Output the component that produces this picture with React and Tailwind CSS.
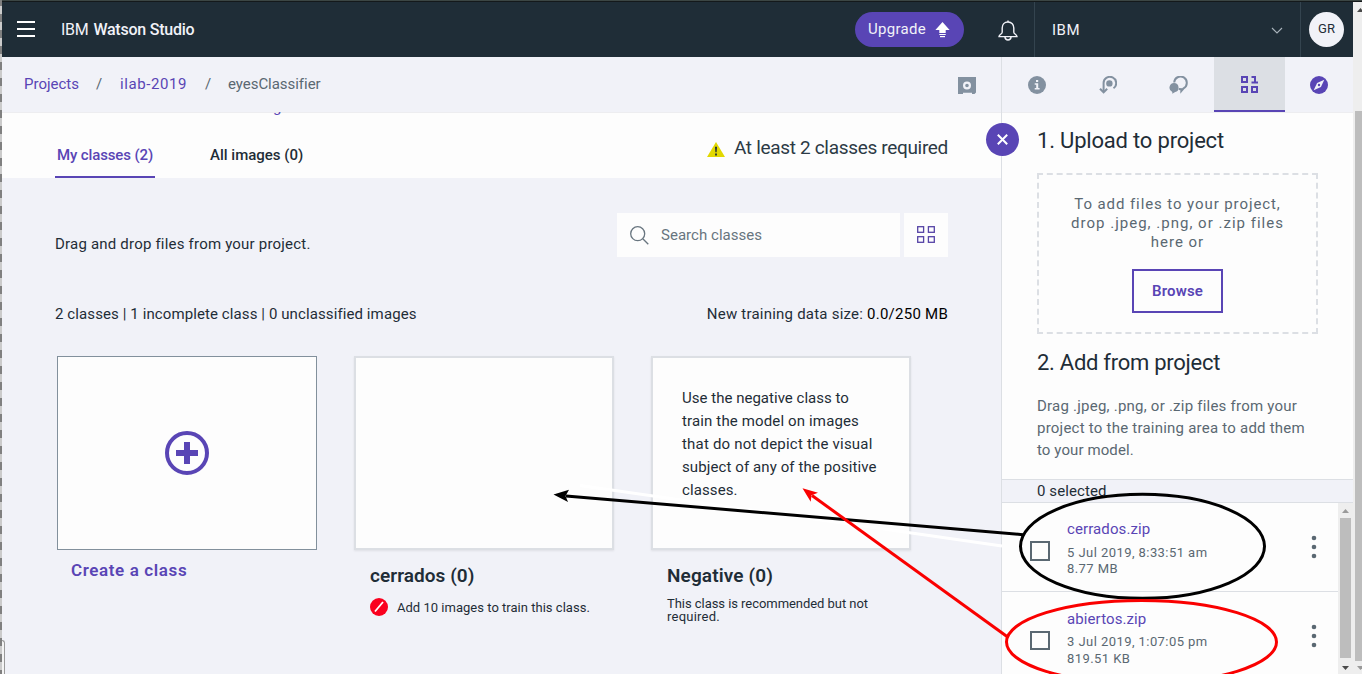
const HEADER_TEXT = "text-[#f1f2f8]";

function Header() {
  return (
    <header className={`flex h-[55px] shrink-0 items-stretch bg-[#1f2d37] ${HEADER_TEXT}`}>
      <div className="flex flex-1 items-center pl-[15px]">
        <div className="mb-px flex w-[18px] flex-col gap-[5px]">
          <span className="h-[2px] bg-white" />
          <span className="h-[2px] bg-white" />
          <span className="h-[2px] bg-white" />
        </div>
        <div className="ml-[26px] flex text-[16px] leading-[20px]">
          <span className="tracking-[-0.3px]">IBM</span>
          <span className="ml-[5px] font-medium tracking-[-0.24px]">Watson Studio</span>
        </div>
      </div>
      <button className="mr-[34px] mt-[10px] flex h-[35px] w-[109px] items-center rounded-full bg-[#5945b5] pl-[13px] text-[15px] leading-[20px]">
        <span className="pb-px tracking-[0.29px]">Upgrade</span>
        <svg className="ml-[9px]" width="15" height="16" viewBox="0 0 15 16" fill="#fff">
          <path d="M7.500 0 14.600 8H10.700V11H4.300V8H.4Z" />
          <rect x="4.300" y="12" width="6.400" height="1" />
          <rect x="5" y="14" width="5" height="1.200" />
        </svg>
      </button>
      <div className="flex w-[36px] shrink-0 items-center">
        <svg width="20" height="22" viewBox="0 0 20 22" fill="none" stroke="#f1f2f8" strokeWidth="1.400" className="mt-[2px]">
          <path d="M10 2C6.300 2 4.200 4.700 4.200 8v4.200C4.200 14 1 14.600 1 16.600h18c0-2-3.200-2.600-3.200-4.400V8C15.800 4.700 13.700 2 10 2Z" />
          <path d="M10 2V.4M6.900 16.900c.2 1.700 1.500 3.100 3.100 3.100s2.900-1.400 3.100-3.100" />
        </svg>
      </div>
      <div className="flex w-[267px] shrink-0 items-center justify-between border-x border-[#34444f] pl-[17px] pr-[17px]">
        <span className="pt-px text-[15px] leading-[20px] tracking-[0.49px]">IBM</span>
        <svg width="12" height="8" viewBox="0 0 12 8" fill="none" stroke="#a9b3bb" strokeWidth="1.100" className="mt-[3px]">
          <path d="m1 1 5 5 5-5" />
        </svg>
      </div>
      <div className="flex w-[52px] shrink-0 items-center pl-[8px]">
        <div className="flex h-[35px] w-[35px] items-center justify-center rounded-full bg-[#f1f2f8] pb-[1px] text-[13px] text-[#1f2d37]">
          GR
        </div>
      </div>
    </header>
  );
}

function Breadcrumb() {
  return (
    <div className="flex h-[56px] shrink-0 items-center border-b border-[#ededf0] pb-[2px] pl-[22px] pr-[25px] text-[15px] leading-[20px] text-[#5945b5]">
      <span className="w-[72px]">Projects</span>
      <span className="w-[24px] text-[#5a6872]">/</span>
      <span className="w-[85px] tracking-[0.58px]">ilab-2019</span>
      <span className="w-[23px] text-[#5a6872]">/</span>
      <span className="flex-1 tracking-[-0.04px] text-[#5a6872]">eyesClassifier</span>
      <svg width="18" height="17" viewBox="0 0 18 17" className="mt-[3px]">
        <path d="M0 0H18V15.500L16.500 17H14V15.800H5V17H0Z" fill="#8391a0" />
        <circle cx="9" cy="8.500" r="2.900" fill="none" stroke="#f1f2f8" strokeWidth="2.200" />
      </svg>
    </div>
  );
}

function Tabs() {
  return (
    <div className="relative flex h-[65px] shrink-0 items-end bg-[#fdfdfd] pl-[53px] pr-[53px] text-[15px] leading-[20px]">
      <div className="absolute -top-px left-[271px] h-[3px] w-[12px] overflow-hidden">
        <div className="-mt-[15px] text-[#5945b5]">g</div>
      </div>
      <div className="h-[33px] w-[100px] border-b-2 border-[#5945b5] pl-[2px] font-medium tracking-[-0.13px] text-[#5945b5]">
        My classes (2)
      </div>
      <div className="ml-[55px] h-[33px] flex-1 font-medium text-[#1f2d37]">All images (0)</div>
      <div className="flex h-[43px] items-start">
        <svg width="18" height="15" viewBox="0 0 18 15" className="mr-[9px] mt-[7px]">
          <path d="M9 0 18 15H0Z" fill="#e2d800" />
          <path d="M8 4.700h2l-.4 5.600H8.400ZM8.100 11.600h1.800v1.900H8.100Z" fill="#1f2d37" />
        </svg>
        <span className="text-[19px] leading-[26px] tracking-[-0.32px] text-[#2c3a45]">At least 2 classes required</span>
      </div>
    </div>
  );
}

function Toolbar() {
  return (
    <div className="flex h-[44px] items-start">
      <p className="flex-1 pt-[21px] leading-[20px] tracking-[0.2px]">Drag and drop files from your project.</p>
      <div className="flex h-[44px] w-[283px] items-center bg-[#fdfdfd] pl-[13px] text-[#68757f]">
        <svg width="19" height="19" viewBox="0 0 19 19" fill="none" stroke="#68757f" strokeWidth="1.300">
          <circle cx="7.700" cy="7.700" r="7" />
          <path d="m12.800 12.800 5.500 5.500" />
        </svg>
        <span className="ml-[12px] leading-[20px] tracking-[0.03px]">Search classes</span>
      </div>
      <div className="ml-[4px] flex h-[44px] w-[44px] items-center justify-center bg-[#fdfdfd]">
        <svg width="18" height="17" viewBox="0 0 18 17" fill="none" stroke="#5543a6" strokeWidth="1.300" className="mb-px">
          <rect x=".7" y=".7" width="5.900" height="5.600" />
          <rect x="11.400" y=".7" width="5.900" height="5.600" />
          <rect x=".7" y="10.700" width="5.900" height="5.600" />
          <rect x="11.400" y="10.700" width="5.900" height="5.600" />
        </svg>
      </div>
    </div>
  );
}

const CARD = "h-[194px] w-[260px] bg-[#fdfdfd]";
const CARD_EDGE = "border-2 border-[#dcdfe4] shadow-[0_1px_2px_rgba(0,0,0,0.08)]";

function Classes() {
  return (
    <div className="mt-[32px] flex gap-[37px] pl-[2px]">
      <section>
        <div className={`${CARD} flex items-center justify-center border border-[#82909c]`}>
          <svg width="44" height="44" viewBox="0 0 44 44" fill="none" stroke="#5945b5">
            <circle cx="22" cy="22" r="20" strokeWidth="4" />
            <path d="M22 11V33M11 22H33" strokeWidth="6" />
          </svg>
        </div>
        <h3 className="ml-[14px] mt-[8px] text-[17px] font-semibold leading-[24px] tracking-[0.61px] text-[#5945b5]">Create a class</h3>
      </section>
      <section>
        <div className={`${CARD} ${CARD_EDGE}`} />
        <h3 className="ml-[16px] mt-[14px] text-[19px] font-semibold leading-[24px] tracking-[0.06px]">cerrados (0)</h3>
        <div className="ml-[16px] mt-[10px] flex items-center text-[13px] leading-[18px]">
          <svg width="18" height="18" viewBox="0 0 18 18" className="mb-[2px]">
            <circle cx="9" cy="9" r="9" fill="#fa001e" />
            <path d="m5 13.500 8-9.500" stroke="#fff" strokeWidth="1.800" />
          </svg>
          <span className="ml-[9px] tracking-[0.02px]">Add 10 images to train this class.</span>
        </div>
      </section>
      <section className="w-[260px]">
        <div className={`${CARD} ${CARD_EDGE} px-[29px] pt-[29px] leading-[23px] tracking-[0.1px]`}>
          <span className="tracking-[0.02px]">Use the negative class to</span>
          <br />
          <span className="tracking-[0.14px]">train the model on images</span>
          <br />
          <span className="tracking-[0.2px]">that do not depict the visual</span>
          <br />
          subject of any of the positive
          <br />
          classes.
        </div>
        <h3 className="ml-[16px] mt-[14px] text-[19px] font-semibold leading-[24px] tracking-[0.13px]">Negative (0)</h3>
        <p className="ml-[16px] mt-[9px] text-[13px] leading-[13px] tracking-[-0.05px]">
          This class is recommended but not
          <br />
          <span className="tracking-[0.24px]">required.</span>
        </p>
      </section>
    </div>
  );
}

function PanelTabs() {
  const tab = "flex w-[70.500px] shrink-0 items-center justify-center";
  return (
    <nav className="flex h-[56px] shrink-0 border-b border-[#ededf0]">
      <div className={tab}>
        <svg width="18" height="18" viewBox="0 0 18 18">
          <circle cx="9" cy="9" r="9" fill="#8391a0" />
          <path d="M8 4h2.200v2H8ZM6.700 7.300h3.500v4.700h1.400v1.500H6.700V12h1.500V8.800H6.700Z" fill="#f1f2f8" />
        </svg>
      </div>
      <div className={tab}>
        <svg width="18" height="18" viewBox="0 0 18 18" fill="none" stroke="#8391a0" strokeWidth="2">
          <path d="M4.600 16V7.600A6.300 6.300 0 1 1 14.500 12.300" />
          <path d="M1 12.800 4.600 16.300 8.200 12.800" />
          <circle cx="10.400" cy="7.400" r="3.200" fill="#8391a0" stroke="none" />
        </svg>
      </div>
      <div className={tab}>
        <svg width="19" height="18" viewBox="0 0 19 18">
          <path d="M5.200 6.500A6.300 6.300 0 1 1 14.600 12.300L12.300 15V13.200L9.800 12.900" fill="none" stroke="#8391a0" strokeWidth="2" />
          <path d="M5 6.900a4.700 4.700 0 0 1 1.200 9.200L3.300 17.800V15.900A4.700 4.700 0 0 1 5 6.900Z" fill="#8391a0" />
        </svg>
      </div>
      <div className="flex w-[71px] shrink-0 items-center justify-center border-b-2 border-[#5945b5] bg-[#dcdfe4]">
        <svg width="17" height="17" viewBox="0 0 17 17" fill="none" stroke="#5945b5" strokeWidth="2" className="mt-[2px]">
          <path d="M1 1H6V6H1ZM1 11H6V16H1ZM11 11H16V16H11Z" />
          <path d="M10.500 1H14V6M10.500 6.500H17" />
        </svg>
      </div>
      <div className="flex flex-1 items-center justify-center">
        <svg width="18" height="18" viewBox="0 0 18 18">
          <circle cx="9" cy="9" r="9" fill="#5945b5" />
          <path d="M14.300 3.700 10.900 10.900 3.700 14.300 7.100 7.100Z" fill="#f1f2f8" />
          <circle cx="9" cy="9" r="1.200" fill="#5945b5" />
        </svg>
      </div>
    </nav>
  );
}

function FileRow({ name, date, size, className, boxClass, dateClass, sizeClass, menuClass }) {
  return (
    <div className={`flex border-[#dcdfe4] pl-[28px] ${className}`}>
      <span className={`w-[20px] shrink-0 border-2 border-[#5a6872] ${boxClass}`} />
      <div className="ml-[17px] flex-1 text-[13px] leading-[16px] tracking-[0.44px] text-[#5a6872]">
        <div className="text-[15px] leading-[20px] tracking-[0.1px] text-[#5945b5]">{name}</div>
        <div className={dateClass}>{date}</div>
        <div className={sizeClass}>{size}</div>
      </div>
      <svg width="6" height="24" viewBox="0 0 6 24" fill="#5a6872" className={`mr-[21px] ${menuClass}`}>
        <circle cx="3" cy="3" r="2.300" />
        <circle cx="3" cy="12" r="2.300" />
        <circle cx="3" cy="21" r="2.300" />
      </svg>
    </div>
  );
}

function ProjectPanel() {
  return (
    <aside className="flex w-[352px] shrink-0 flex-col border-l border-[#dcdfe4]">
      <PanelTabs />
      <div className="h-[366px] shrink-0 bg-[#fdfdfd] pl-[35px] pr-[35px] pt-[14px]">
        <h2 className="text-[22px] leading-[28px] tracking-[-0.19px]">1. Upload to project</h2>
        <div className="mt-[18px] flex h-[161px] flex-col items-center border-2 border-dashed border-[#dcdfe4] pt-[20px] text-center text-[15px] leading-[19px] tracking-[0.97px] text-[#5a6872]">
          <p>
            <span className="tracking-[0.91px]">To add files to your project,</span>
            <br />
            <span className="tracking-[1.010px]">drop .jpeg, .png, or .zip files</span>
            <br />
            here or
          </p>
          <button className="mt-[17px] h-[44px] w-[91px] border-2 border-[#5945b5] text-[15px] font-semibold tracking-[0.16px] text-[#5945b5]">
            Browse
          </button>
        </div>
        <h2 className="mt-[15px] text-[22px] leading-[28px] tracking-[-0.27px]">2. Add from project</h2>
        <p className="mt-[18px] whitespace-nowrap text-[15px] leading-[22px] tracking-[0.23px] text-[#5a6872]">
          Drag .jpeg, .png, or .zip files from your
          <br />
          project to the training area to add them
          <br />
          <span className="tracking-[0.1px]">to your model.</span>
        </p>
      </div>
      <div className="h-[24px] shrink-0 border-y border-[#dcdfe4] pl-[35px] text-[15px] leading-[23px] tracking-[0.09px]">0 selected</div>
      <div className="flex flex-1 overflow-hidden bg-[#fdfdfd]">
        <div className="flex-1">
          <FileRow name="cerrados.zip" date="5 Jul 2019, 8:33:51 am" size="8.77 MB" className="h-[89px] border-b pt-[16px]" boxClass="mt-[22px] h-[20px]" dateClass="mt-[6px]" sizeClass="" menuClass="mt-[16px]" />
          <FileRow name="abiertos.zip" date="3 Jul 2019, 1:07:05 pm" size="819.51 KB" className="h-[89px] pt-[17px]" boxClass="mt-[22px] h-[19px]" dateClass="mt-[5px]" sizeClass="mt-px" menuClass="mt-[15px]" />
        </div>
        <div className="flex w-[15px] shrink-0 flex-col items-center bg-[#eeeeee]">
          <svg width="7" height="4" viewBox="0 0 7 4" className="mb-[5px] mt-[6px]">
            <path d="M3.500 0 7 4H0Z" fill="#9a9a9a" />
          </svg>
          <div className="h-[140px] w-[11px] bg-[#bdbdbd]" />
          <svg width="7" height="4" viewBox="0 0 7 4" className="mt-[8px]">
            <path d="M0 0H7L3.500 4Z" fill="#4a4a4a" />
          </svg>
        </div>
      </div>
    </aside>
  );
}

function PageScrollbar() {
  return (
    <div className="flex w-[9px] shrink-0 flex-col overflow-hidden bg-[#eeeeee] pl-[2px]">
      <svg width="7" height="4" viewBox="0 0 7 4" className="ml-[2px] mt-[6px] shrink-0">
        <path d="M3.500 0 7 4H0Z" fill="#4a4a4a" />
      </svg>
      <div className="mt-[99px] h-[550px] w-[7px] shrink-0 bg-[#bdbdbd]" />
      <svg width="7" height="4" viewBox="0 0 7 4" className="ml-[2px] mt-[5px] shrink-0">
        <path d="M0 0H7L3.500 4Z" fill="#9a9a9a" />
      </svg>
    </div>
  );
}

/* Hand-drawn arrows and ellipses that lie over the page. */
function Annotations() {
  return (
    <svg className="pointer-events-none absolute left-0 top-0" width="1362" height="674" viewBox="0 0 1362 674" fill="none" strokeWidth="3">
      <path d="M580 485.500 1002 546" stroke="#fff" />
      <path d="M566 495.900 1023 534.700" stroke="#000" />
      <path d="M553.500 494.500 569 489.700 565.500 495.900 568 502Z" fill="#000" />
      <ellipse cx="1142.500" cy="546.300" rx="122" ry="52" stroke="#000" />
      <path d="M812 495.500 1007 636.500" stroke="#fa0000" />
      <path d="M802.500 488.300 818 492.700 811.500 495.200 810.700 501.700Z" fill="#fa0000" />
      <ellipse cx="1141.500" cy="642" rx="135" ry="41.500" stroke="#fa0000" />
    </svg>
  );
}

export default function App() {
  return (
    <div className="relative flex h-[674px] w-[1362px] overflow-hidden bg-[#f1f2f8] font-['Roboto','Liberation_Sans',sans-serif] text-[15px] text-[#1f2d37]">
      <div className="w-[2px] shrink-0 bg-[repeating-linear-gradient(180deg,#808080_0,#808080_8px,#cbcbcb_8px,#cbcbcb_16px)] bg-[position:0_-2px]" />
      <div className="flex min-w-0 flex-1 flex-col">
        <div className="h-[2px] shrink-0 border-b border-[#14191b] bg-[#3c4644]" />
        <div className="flex min-h-0 flex-1">
          <div className="flex min-w-0 flex-1 flex-col">
            <Header />
            <div className="flex min-h-0 flex-1">
              <main className="flex min-w-0 flex-1 flex-col">
                <Breadcrumb />
                <Tabs />
                <div className="pl-[53px] pr-[53px] pt-[35px]">
                  <Toolbar />
                  <div className="mt-[47px] flex justify-between leading-[20px]">
                    <span className="tracking-[0.1px]">2 classes | 1 incomplete class | 0 unclassified images</span>
                    <span className="tracking-[0.22px]">
                      New training data size: <span className="tracking-[0.25px] text-black">0.0/250 MB</span>
                    </span>
                  </div>
                  <Classes />
                </div>
              </main>
              <ProjectPanel />
            </div>
          </div>
          <PageScrollbar />
        </div>
      </div>
      <button className="absolute left-[986px] top-[123px] flex h-[33px] w-[33px] items-center justify-center rounded-full bg-[#5945b5]">
        <svg width="11" height="11" viewBox="0 0 11 11" stroke="#fff" strokeWidth="2">
          <path d="m.8.800 9.400 9.400M10.200.800.800 10.200" />
        </svg>
      </button>
      <div className="absolute -bottom-[4px] left-[2px] h-[38px] w-[3px] rounded-tr-[3px] border-r border-t border-[#9a9a9a] bg-[#f4f4f4]" />
      <Annotations />
    </div>
  );
}
